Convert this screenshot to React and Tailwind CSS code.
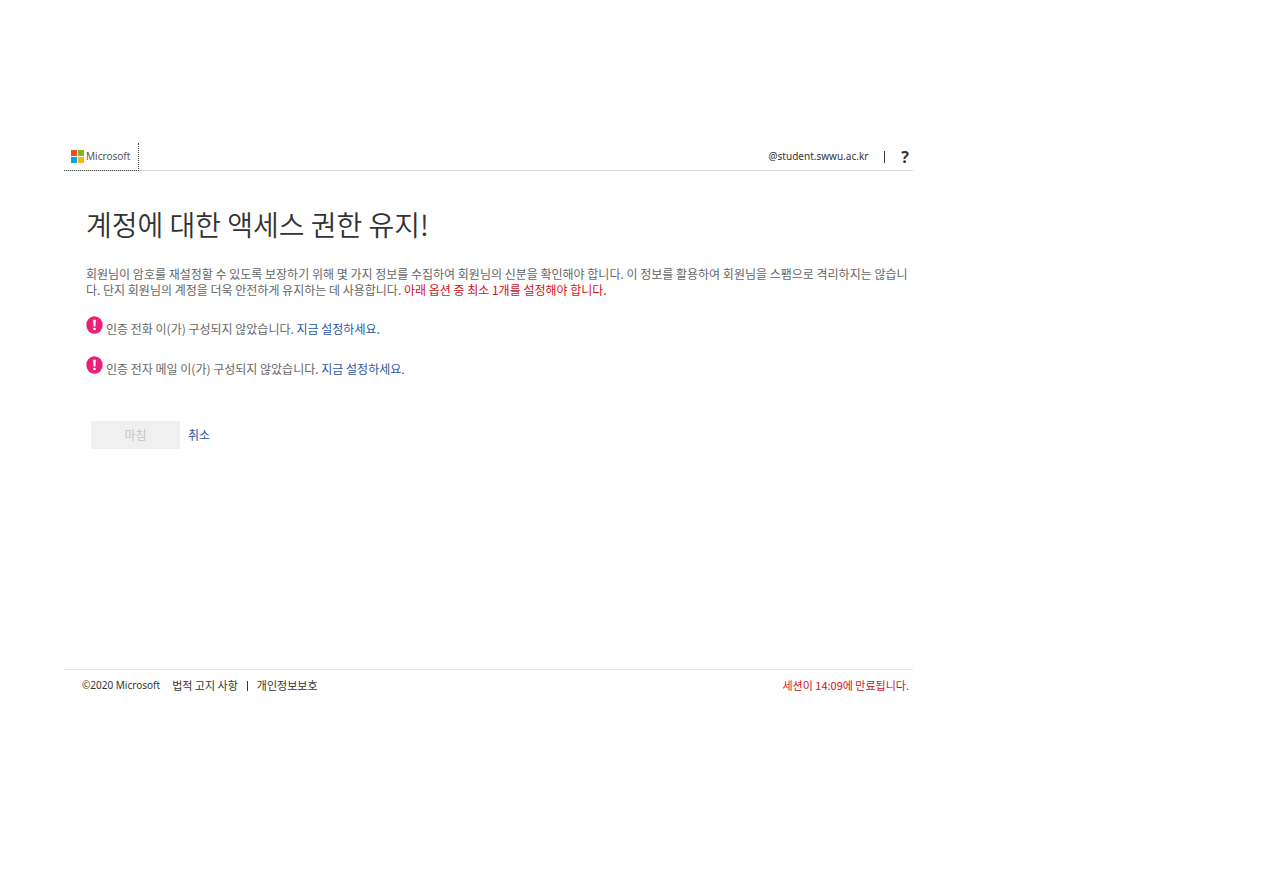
const methods = [
  { id: 'phone', label: '인증 전화 이(가) 구성되지 않았습니다.' },
  { id: 'email', label: '인증 전자 메일 이(가) 구성되지 않았습니다.' },
]

function MicrosoftLogo() {
  return (
    <svg viewBox="0 0 13 13" className="w-[13px] h-[13px] shrink-0" aria-hidden="true">
      <rect width="6" height="6" fill="#e8502a" />
      <rect x="7" width="6" height="6" fill="#80b71c" />
      <rect y="7" width="6" height="6" fill="#12a0ea" />
      <rect x="7" y="7" width="6" height="6" fill="#fbb50e" />
    </svg>
  )
}

function AlertIcon() {
  return (
    <svg viewBox="0 0 17 18" className="w-[17px] h-[18px] shrink-0" aria-hidden="true">
      <ellipse cx="8.5" cy="9" rx="8.2" ry="8.8" fill="#ec1f78" />
      <path d="M7.2 3.8h2.6l-.4 6.7H7.6z" fill="#fff" />
      <circle cx="8.5" cy="13" r="1.3" fill="#fff" />
    </svg>
  )
}

function Header() {
  return (
    <header className="flex items-stretch justify-between h-7 border-b border-[#dadada] font-['Noto_Sans',sans-serif]">
      <a
        href="#"
        className="flex items-center gap-[2px] w-[75px] -mb-px pl-[7px] border-r border-b border-dotted border-[#444] text-[10px] text-[#555]"
      >
        <MicrosoftLogo />
        Microsoft
      </a>
      <div className="flex items-center pr-1 text-[10px] text-[#333]">
        <span>@student.swwu.ac.kr</span>
        <span className="mx-4 h-3 w-px bg-[#333]" />
        <button type="button" aria-label="도움말" className="text-base font-bold leading-4">
          ?
        </button>
      </div>
    </header>
  )
}

function Footer() {
  return (
    <footer className="flex items-center justify-between h-8 border-t border-[#e6e6e6] pl-[18px] pr-1 text-[11px] text-[#333]">
      <div className="flex items-center">
        <span className="mr-3 text-[10px] font-['Noto_Sans',sans-serif]">©2020 Microsoft</span>
        <a href="#">법적 고지 사항</a>
        <span className="mx-[9px] h-[10px] w-px bg-[#333]" />
        <a href="#">개인정보보호</a>
      </div>
      <p className="text-[#c8141e]">세션이 14:09에 만료됩니다.</p>
    </footer>
  )
}

export default function App() {
  return (
    <div className="min-h-screen bg-white pt-[143px] pl-16 font-['Noto_Sans_CJK_KR',sans-serif]">
      <div className="w-full max-w-[849px]">
        <Header />

        <main className="min-h-[498px] pl-[22px] pr-1 pt-[35px] text-xs text-[#666]">
          <h1 className="text-[28px] leading-9 font-[350] text-[#333]">
            계정에 대한 액세스 권한 유지!
          </h1>

          <p className="mt-6 leading-4 break-all">
            회원님이 암호를 재설정할 수 있도록 보장하기 위해 몇 가지 정보를 수집하여 회원님의 신분을
            확인해야 합니다. 이 정보를 활용하여 회원님을 스팸으로 격리하지는 않습니다. 단지 회원님의
            계정을 더욱 안전하게 유지하는 데 사용합니다.{' '}
            <span className="text-[#d2121a]">아래 옵션 중 최소 1개를 설정해야 합니다.</span>
          </p>

          <ul className="mt-[18px] space-y-5">
            {methods.map(({ id, label }) => (
              <li key={id} className="flex items-start gap-[3px] h-5">
                <AlertIcon />
                <span className="pt-[5px] leading-4">
                  {label}{' '}
                  <a href="#" className="text-[#2a57a5]">
                    지금 설정하세요.
                  </a>
                </span>
              </li>
            ))}
          </ul>

          <div className="flex items-center gap-2 mt-[45px] pl-[5px]">
            <button type="button" disabled className="w-[89px] h-7 bg-[#f0f0f0] text-[#c4c4c4]">
              마침
            </button>
            <a href="#" className="text-[#2a57a5]">
              취소
            </a>
          </div>
        </main>

        <Footer />
      </div>
    </div>
  )
}
